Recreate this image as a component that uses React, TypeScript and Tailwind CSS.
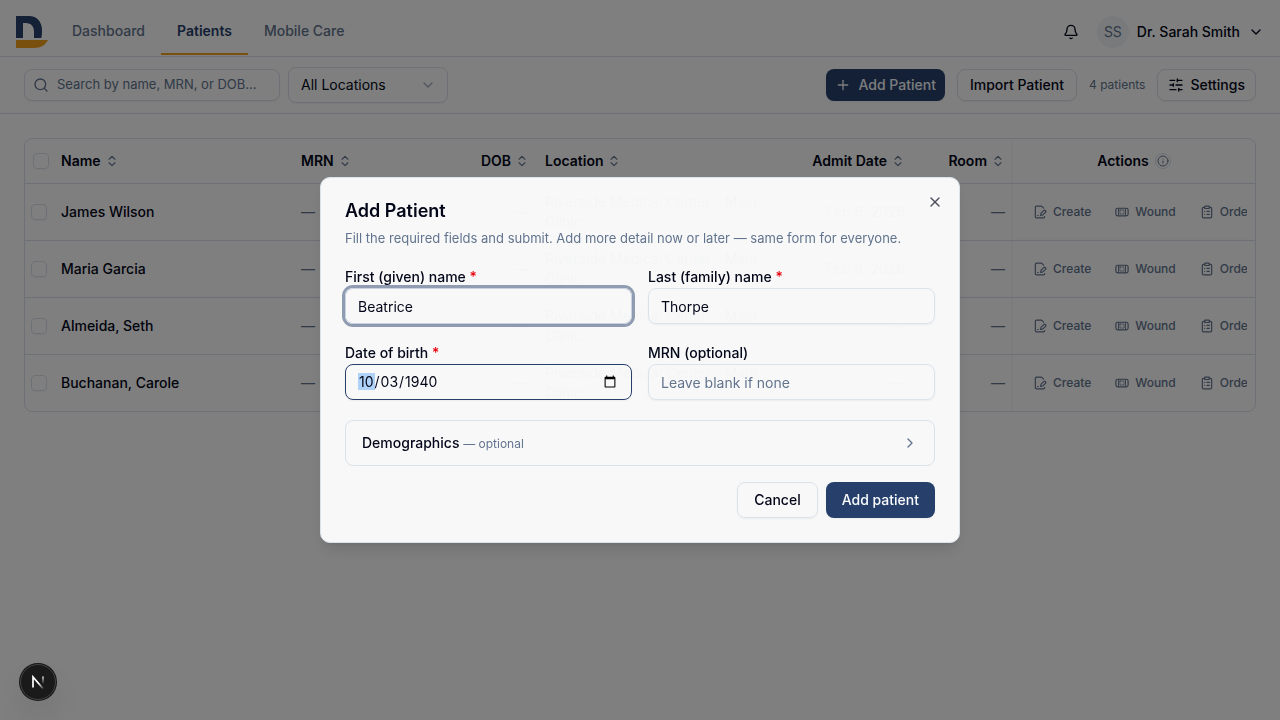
import type { ReactNode } from "react";
import {
  Bell,
  ChevronDown,
  ChevronRight,
  ChevronsUpDown,
  ClipboardList,
  FilePenLine,
  Info,
  Plus,
  Search,
  SlidersHorizontal,
  X,
} from "lucide-react";

const navItems = [
  { label: "Dashboard", isActive: false },
  { label: "Patients", isActive: true },
  { label: "Mobile Care", isActive: false },
];

const patients = [
  { name: "James Wilson", admitDate: "Feb 6, 2026" },
  { name: "Maria Garcia", admitDate: "Feb 8, 2026" },
  { name: "Almeida, Seth", admitDate: "—" },
  { name: "Buchanan, Carole", admitDate: "—" },
];

const outlineButton =
  "inline-flex items-center justify-center rounded-lg border border-[#dae2ec] text-sm font-medium shadow-xs";

const fieldInput =
  "block h-9 w-full rounded-lg border px-3 text-sm shadow-xs outline-none placeholder:text-slate-500";

function Logo() {
  return (
    <svg viewBox="0 0 32 32" className="size-8" aria-hidden="true">
      <path
        d="M0 0H13C21 0 26 6 26 14C26 17 26 19.500 25.300 22H18V15.500C18 10.500 15 7 10 7H7V22H0Z"
        fill="#27406b"
      />
      <path d="M0 24H32C29.500 29 25 32 18 32H0Z" fill="#f5a11d" />
    </svg>
  );
}

function BandageIcon() {
  return (
    <svg
      viewBox="0 0 24 24"
      className="size-[14px] shrink-0"
      fill="none"
      stroke="currentColor"
      strokeWidth="2"
      strokeLinecap="round"
      strokeLinejoin="round"
      aria-hidden="true"
    >
      <rect x="1.500" y="5.500" width="21" height="13" rx="3" />
      <path d="M6 6v12M18 6v12" strokeWidth="1.500" />
      <rect x="8.500" y="8.500" width="7" height="7" strokeWidth="1.200" strokeDasharray="1.500 1.500" />
    </svg>
  );
}

function SortButton({ children }: { children: ReactNode }) {
  return (
    <button type="button" className="inline-flex items-center gap-1 font-semibold">
      {children}
      <ChevronsUpDown className="size-[14px] text-slate-500" />
    </button>
  );
}

function Header() {
  return (
    <header className="flex h-[57px] items-center justify-between border-b border-[#dae2ec] px-4">
      <div className="flex h-full items-center gap-2 pt-2">
        <a href="#" aria-label="Home">
          <Logo />
        </a>
        <nav className="flex h-full">
          {navItems.map((item) => (
            <a
              key={item.label}
              href="#"
              className={
                item.isActive
                  ? "mb-px flex items-center border-b-2 border-[#f5a11d] px-4 text-sm font-semibold text-[#27406b]"
                  : "mb-px flex items-center border-b-2 border-transparent px-4 text-sm font-medium text-slate-500"
              }
            >
              {item.label}
            </a>
          ))}
        </nav>
      </div>
      <div className="flex items-center gap-[18px] pt-2">
        <button type="button" aria-label="Notifications">
          <Bell className="size-4" />
        </button>
        <button type="button" className="flex items-center gap-2 text-sm font-medium">
          <span className="flex size-8 items-center justify-center rounded-full bg-slate-100 font-normal text-slate-500">
            SS
          </span>
          Dr. Sarah Smith
          <ChevronDown className="size-4" />
        </button>
      </div>
    </header>
  );
}

function Toolbar() {
  return (
    <div className="flex h-[57px] items-center justify-between border-b border-[#dae2ec] px-6">
      <div className="flex items-center gap-2">
        <label className="flex h-8 w-64 items-center gap-2 rounded-lg border border-[#dae2ec] px-2 text-slate-500 shadow-xs">
          <Search className="size-4 shrink-0" />
          <input
            type="search"
            aria-label="Search patients"
            placeholder="Search by name, MRN, or DOB..."
            className="min-w-0 flex-1 text-[13px] outline-none placeholder:text-slate-500"
          />
        </label>
        <div className="relative">
          <select
            aria-label="Location"
            className="h-9 w-40 appearance-none rounded-lg border border-[#dae2ec] px-3 text-sm shadow-xs"
          >
            <option>All Locations</option>
          </select>
          <ChevronDown className="pointer-events-none absolute right-3 top-[10px] size-4 text-slate-500 opacity-60" />
        </div>
      </div>
      <div className="flex items-center gap-3">
        <button
          type="button"
          className="inline-flex h-8 items-center gap-2 rounded-lg bg-[#27406b] px-[9px] text-sm font-medium text-slate-50 shadow-xs"
        >
          <Plus className="size-4" />
          Add Patient
        </button>
        <button type="button" className={`${outlineButton} h-8 px-3`}>
          Import Patient
        </button>
        <span className="text-xs text-slate-500">4 patients</span>
        <button type="button" className={`${outlineButton} h-8 gap-[6px] px-[10px]`}>
          <SlidersHorizontal className="size-4" />
          Settings
        </button>
      </div>
    </div>
  );
}

function PatientTable() {
  return (
    <div className="m-6 overflow-hidden rounded-lg border border-[#dae2ec]">
      <table className="w-full table-fixed text-sm">
        <colgroup>
          <col className="w-7" />
          <col className="w-60" />
          <col className="w-40" />
          <col className="w-[84px]" />
          <col />
          <col className="w-[136px]" />
          <col className="w-[100px]" />
          <col className="w-[242px]" />
        </colgroup>
        <thead>
          <tr className="h-11 border-b border-[#dae2ec] text-left">
            <th className="pl-2">
              <input
                type="checkbox"
                aria-label="Select all patients"
                className="block size-4 appearance-none rounded-sm border border-[#dae2ec] shadow-xs"
              />
            </th>
            <th className="px-2"><SortButton>Name</SortButton></th>
            <th className="px-2"><SortButton>MRN</SortButton></th>
            <th className="px-2 text-right"><SortButton>DOB</SortButton></th>
            <th className="px-2"><SortButton>Location</SortButton></th>
            <th className="px-2 text-right"><SortButton>Admit Date</SortButton></th>
            <th className="px-2 text-right"><SortButton>Room</SortButton></th>
            <th className="px-2 font-semibold shadow-[-1px_0_2px_rgba(0,0,0,0.05)]">
              <div className="flex items-center justify-center gap-[6px]">
                Actions
                <span className="flex size-4 items-center justify-center rounded-full border border-[#dae2ec] text-slate-500">
                  <Info className="size-3" />
                </span>
              </div>
            </th>
          </tr>
        </thead>
        <tbody>
          {patients.map((patient) => (
            <tr key={patient.name} className="border-b border-[#dae2ec] last:border-b-0">
              <td className="pl-[6px]">
                <input
                  type="checkbox"
                  aria-label={`Select ${patient.name}`}
                  className="block size-4 appearance-none rounded-sm border border-[#dae2ec] shadow-xs"
                />
              </td>
              <td className="p-2 font-medium">{patient.name}</td>
              <td className="p-2 text-slate-500">—</td>
              <td className="p-2 text-right text-slate-500">—</td>
              <td className="p-2 text-slate-500">Riverside Medical Center - Main Clinic</td>
              <td className="p-2 text-right text-slate-500">{patient.admitDate}</td>
              <td className="p-2 text-right text-slate-500">—</td>
              <td className="p-2 shadow-[-1px_0_2px_rgba(0,0,0,0.05)]">
                <div className="flex items-center overflow-hidden text-xs font-medium text-slate-500">
                  <button type="button" className="flex h-8 shrink-0 items-center gap-[6px] px-3">
                    <FilePenLine className="size-[14px]" />
                    Create
                  </button>
                  <button type="button" className="flex h-8 shrink-0 items-center gap-[6px] px-3">
                    <BandageIcon />
                    Wound
                  </button>
                  <button type="button" className="flex h-8 shrink-0 items-center gap-[6px] px-3">
                    <ClipboardList className="size-[14px]" />
                    Orders
                  </button>
                </div>
              </td>
            </tr>
          ))}
        </tbody>
      </table>
    </div>
  );
}

function FieldLabel({ htmlFor, children, isRequired }: { htmlFor: string; children: ReactNode; isRequired?: boolean }) {
  return (
    <div className="h-6">
      <label htmlFor={htmlFor} className="text-sm font-medium">
        {children}
        {isRequired && <span className="text-red-600"> *</span>}
      </label>
    </div>
  );
}

function AddPatientDialog() {
  return (
    <div className="fixed inset-0 z-10 flex items-center justify-center bg-black/50">
      <div
        role="dialog"
        aria-modal="true"
        aria-labelledby="dialog-title"
        className="relative w-full max-w-[640px] rounded-[10px] border border-[#dae2ec] bg-white/95 p-6 shadow-lg"
      >
        <h2 id="dialog-title" className="text-lg font-semibold leading-[18px]">
          Add Patient
        </h2>
        <p className="mt-2 text-[13px] leading-5 text-slate-500">
          Fill the required fields and submit. Add more detail now or later — same form for everyone.
        </p>
        <button type="button" aria-label="Close" className="absolute right-4 top-4 opacity-70">
          <X className="size-4" />
        </button>

        <form className="mt-4">
          <div className="grid grid-cols-2 gap-4">
            <div>
              <FieldLabel htmlFor="first-name" isRequired>First (given) name</FieldLabel>
              <input
                id="first-name"
                defaultValue="Beatrice"
                className={`${fieldInput} border-[#c9d3e0] ring-3 ring-[#27406b]/50`}
              />
            </div>
            <div>
              <FieldLabel htmlFor="last-name" isRequired>Last (family) name</FieldLabel>
              <input id="last-name" defaultValue="Thorpe" className={`${fieldInput} border-[#dae2ec]`} />
            </div>
            <div>
              <FieldLabel htmlFor="dob" isRequired>Date of birth</FieldLabel>
              <input
                id="dob"
                type="date"
                defaultValue="1940-10-03"
                className={`${fieldInput} border-[#27406b] [&::-webkit-datetime-edit-month-field]:bg-[#b0d2f9]`}
              />
            </div>
            <div>
              <FieldLabel htmlFor="mrn">MRN (optional)</FieldLabel>
              <input id="mrn" placeholder="Leave blank if none" className={`${fieldInput} border-[#dae2ec]`} />
            </div>
          </div>

          <button
            type="button"
            className="mt-5 flex w-full items-center justify-between rounded-lg border border-[#dae2ec] px-4 py-3 text-left text-sm font-medium"
          >
            <span>
              Demographics <span className="text-xs font-normal text-slate-500">— optional</span>
            </span>
            <ChevronRight className="size-4 text-slate-500" />
          </button>

          <div className="mt-4 flex justify-end gap-2">
            <button type="button" className={`${outlineButton} h-9 px-4`}>
              Cancel
            </button>
            <button
              type="submit"
              className="h-9 rounded-lg bg-[#27406b] px-4 text-sm font-medium text-slate-50 shadow-xs"
            >
              Add patient
            </button>
          </div>
        </form>
      </div>
    </div>
  );
}

function DevToolsBadge() {
  return (
    <button
      type="button"
      aria-label="Open dev tools"
      className="fixed bottom-5 left-5 z-20 flex size-9 items-center justify-center rounded-full border border-[#444] bg-[#1a1a1a] shadow-[0_0_0_1px_#171717,0_16px_32px_-8px_rgba(0,0,0,0.24)]"
    >
      <svg viewBox="0 0 14 14" className="size-[14px]" fill="none" aria-hidden="true">
        <defs>
          <linearGradient id="stem" x1="11.500" y1="1" x2="11.500" y2="9" gradientUnits="userSpaceOnUse">
            <stop stopColor="#fff" />
            <stop offset="1" stopColor="#fff" stopOpacity="0" />
          </linearGradient>
          <linearGradient id="slash" x1="8" y1="8" x2="12" y2="13" gradientUnits="userSpaceOnUse">
            <stop stopColor="#fff" />
            <stop offset="1" stopColor="#fff" stopOpacity="0.200" />
          </linearGradient>
        </defs>
        <path d="M12 1.500V9.500" stroke="url(#stem)" strokeWidth="1.500" />
        <path d="M2 12.500V2L12 13.500" stroke="url(#slash)" strokeWidth="1.700" />
      </svg>
    </button>
  );
}

export default function App() {
  return (
    <div className="min-h-screen bg-white font-[Inter,sans-serif] text-slate-950">
      <Header />
      <Toolbar />
      <main>
        <PatientTable />
      </main>
      <AddPatientDialog />
      <DevToolsBadge />
    </div>
  );
}
